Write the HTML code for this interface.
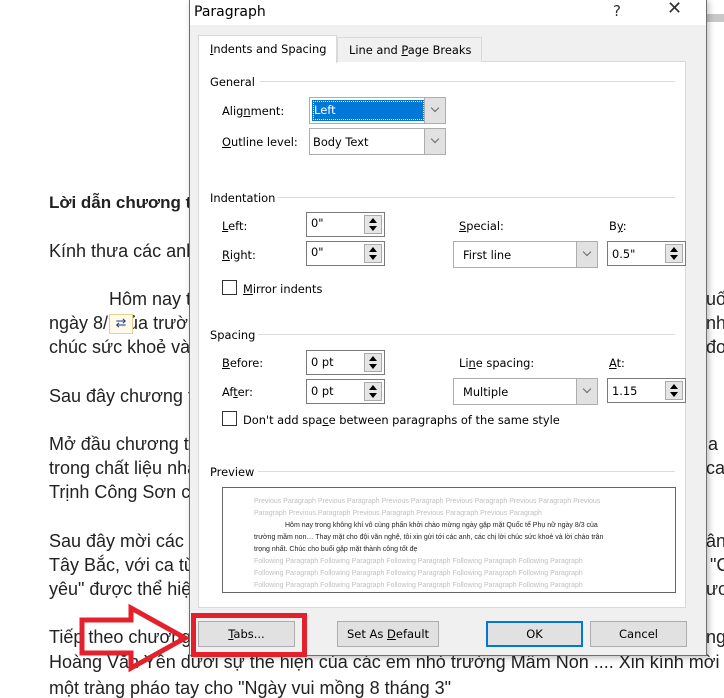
<!DOCTYPE html>
<html><head><meta charset="utf-8"><style>
*{margin:0;padding:0;box-sizing:border-box}
body{width:724px;height:686px;overflow:hidden;background:#fff;position:relative;font-family:"Liberation Sans",Arial,sans-serif}
.doc{position:absolute;left:49px;font-size:18px;color:#222;white-space:nowrap;line-height:20px}
.d{position:absolute;font-family:"DejaVu Sans","Liberation Sans",sans-serif;font-size:11.4px;color:#000;white-space:nowrap;line-height:14px}
.box{position:absolute;background:#fff;border:1px solid #7a7a7a}
.sel{position:absolute;background:#fff;border:1px solid #adadad}
.sel .b{position:absolute;right:0;top:0;bottom:0;width:21px;background:#e1e1e1;border-left:1px solid #adadad}
.sel .b:after{content:"";position:absolute;left:7px;top:7px;width:5px;height:5px;border-right:1px solid #666;border-bottom:1px solid #666;transform:rotate(45deg)}
.spin{position:absolute;right:2px;top:2px;width:18px;bottom:2px;background:#e5e5e5;border:1px solid #aaa}
.spin:before{content:"";position:absolute;left:4px;top:2px;border:4px solid transparent;border-bottom:5px solid #000;border-top:0}
.spin:after{content:"";position:absolute;left:4px;bottom:2px;border:4px solid transparent;border-top:5px solid #000;border-bottom:0}
.hr{position:absolute;height:1px;background:#dcdcdc}
.cb{position:absolute;width:15px;height:15px;border:1px solid #333;background:#fff}
.btn{position:absolute;height:26px;background:#e1e1e1;border:1px solid #adadad;font-family:"DejaVu Sans",sans-serif;font-size:11.5px;text-align:center;line-height:24px}
.pv{position:absolute;font-size:7px;color:#c0c0c0;white-space:nowrap;line-height:11.5px}
u{text-decoration:underline}
</style></head><body>
<div class="doc" style="top:193px;font-weight:bold;font-size:17px">Lời dẫn chương trình</div>
<div class="doc" style="top:241px">Kính thưa các anh chị</div>
<div class="doc" style="top:289px">&nbsp;&nbsp;&nbsp;&nbsp;&nbsp;&nbsp;&nbsp;&nbsp;&nbsp;&nbsp;&nbsp;&nbsp;Hôm nay trong</div>
<div class="doc" style="top:313px">ngày 8/&nbsp;&nbsp;&nbsp;&nbsp;ủa trường</div>
<div style="position:absolute;left:109px;top:314px;width:24px;height:20px;border:1px solid #e6d28a;background:#fffbe8;color:#1a3a9a;font-size:13px;text-align:center">⇄</div>
<div class="doc" style="top:337px">chúc sức khoẻ và lời</div>
<div class="doc" style="top:386px">Sau đây chương trình</div>
<div class="doc" style="top:434px">Mở đầu chương trình</div>
<div class="doc" style="top:458px">trong chất liệu nhạc</div>
<div class="doc" style="top:482px">Trịnh Công Sơn của</div>
<div class="doc" style="top:531px">Sau đây mời các anh</div>
<div class="doc" style="top:555px">Tây Bắc, với ca từ</div>
<div class="doc" style="top:579px">yêu" được thể hiện</div>
<div class="doc" style="top:627px">Tiếp theo chương trình</div>
<div class="doc" style="top:652px">Hoàng Văn Yên dưới sự thể hiện của các em nhỏ trường Mầm Non .... Xin kính mời</div>
<div class="doc" style="top:678px">một tràng pháo tay cho "Ngày vui mồng 8 tháng 3"</div>
<div class="doc" style="left:706px;top:289px">uố</div>
<div class="doc" style="left:706px;top:313px">nh</div>
<div class="doc" style="left:706px;top:337px">đơ</div>
<div class="doc" style="left:708px;top:434px">a</div>
<div class="doc" style="left:706px;top:458px">ca"</div>
<div class="doc" style="left:706px;top:531px">ân</div>
<div class="doc" style="left:710px;top:555px">"C</div>
<div class="doc" style="left:706px;top:579px">ươ</div>
<div class="doc" style="left:706px;top:627px">ng</div>
<div style="position:absolute;left:706px;top:14px;width:18px;height:8px;background:#c8c8c8"></div>

<svg style="position:absolute;left:0;top:0" width="724" height="686"><polygon points="82,620 131,620 131,608 185,638 131,668 131,653 82,653" fill="none" stroke="#e3202b" stroke-width="5" stroke-linejoin="miter"/></svg>

<div style="position:absolute;left:189px;top:-1px;width:518px;height:657px;background:#f0f0f0;border:1px solid #6f6f6f;box-shadow:2px 2px 6px rgba(0,0,0,.25)">
<div style="position:absolute;left:0;top:0;right:0;height:25px;background:#fff"></div>
</div>
<div class="d" style="left:194px;top:5px;font-size:14px">Paragraph</div>
<div class="d" style="left:613px;top:4px;font-size:15px;color:#333">?</div>
<div class="d" style="left:667px;top:2px;font-size:18px;color:#333">✕</div>
<div style="position:absolute;left:198px;top:61px;width:488px;height:547px;background:#fff;border:1px solid #d9d9d9"></div>
<div style="position:absolute;left:337px;top:37px;width:145px;height:25px;background:#f0f0f0;border:1px solid #d9d9d9;border-bottom:0"></div>
<div class="d" style="left:349px;top:43px"><span>Line and <u>P</u>age Breaks</span></div>
<div style="position:absolute;left:198px;top:35px;width:139px;height:28px;background:#fff;border:1px solid #d9d9d9;border-bottom:0"></div>
<div class="d" style="left:210px;top:42px"><u>I</u>ndents and Spacing</div>

<div class="d" style="left:210px;top:75px">General</div><div class="hr" style="left:260px;top:81px;width:415px"></div>
<div class="d" style="left:222px;top:104px">Alig<u>n</u>ment:</div>
<div class="sel" style="left:309px;top:97px;width:137px;height:27px"><div style="position:absolute;left:2px;top:2px;width:113px;height:21px;background:#0078d7;outline:1px dotted #fff;outline-offset:-2px;color:#fff;font-family:'DejaVu Sans',sans-serif;font-size:11.5px;padding:3px 2px">Left</div><div class="b"></div></div>
<div class="d" style="left:222px;top:135px"><u>O</u>utline level:</div>
<div class="sel" style="left:309px;top:128px;width:137px;height:27px"><div class="d" style="left:3px;top:6px">Body Text</div><div class="b"></div></div>

<div class="d" style="left:210px;top:191px">Indentation</div><div class="hr" style="left:278px;top:197px;width:397px"></div>
<div class="d" style="left:222px;top:219px"><u>L</u>eft:</div>
<div class="box" style="left:306px;top:212px;width:79px;height:25px"><div class="d" style="left:4px;top:3px">0"</div><div class="spin"></div></div>
<div class="d" style="left:222px;top:248px"><u>R</u>ight:</div>
<div class="box" style="left:306px;top:241px;width:79px;height:25px"><div class="d" style="left:4px;top:3px">0"</div><div class="spin"></div></div>
<div class="d" style="left:459px;top:219px"><u>S</u>pecial:</div>
<div class="sel" style="left:453px;top:241px;width:145px;height:27px"><div class="d" style="left:9px;top:6px">First line</div><div class="b"></div></div>
<div class="d" style="left:609px;top:219px">B<u>y</u>:</div>
<div class="box" style="left:607px;top:241px;width:79px;height:25px"><div class="d" style="left:4px;top:5px">0.5"</div><div class="spin"></div></div>
<div class="cb" style="left:222px;top:280px"></div>
<div class="d" style="left:243px;top:282px"><u>M</u>irror indents</div>

<div class="d" style="left:210px;top:328px">Spacing</div><div class="hr" style="left:258px;top:334px;width:417px"></div>
<div class="d" style="left:222px;top:356px"><u>B</u>efore:</div>
<div class="box" style="left:306px;top:350px;width:79px;height:25px"><div class="d" style="left:4px;top:4px">0 pt</div><div class="spin"></div></div>
<div class="d" style="left:222px;top:385px">Af<u>t</u>er:</div>
<div class="box" style="left:306px;top:379px;width:79px;height:25px"><div class="d" style="left:4px;top:4px">0 pt</div><div class="spin"></div></div>
<div class="d" style="left:459px;top:356px">Li<u>n</u>e spacing:</div>
<div class="sel" style="left:453px;top:378px;width:145px;height:27px"><div class="d" style="left:9px;top:6px">Multiple</div><div class="b"></div></div>
<div class="d" style="left:609px;top:356px"><u>A</u>t:</div>
<div class="box" style="left:607px;top:378px;width:79px;height:25px"><div class="d" style="left:4px;top:5px">1.15</div><div class="spin"></div></div>
<div class="cb" style="left:222px;top:411px"></div>
<div class="d" style="left:243px;top:413px">Don't add spa<u>c</u>e between paragraphs of the same style</div>

<div class="d" style="left:210px;top:465px">Preview</div><div class="hr" style="left:258px;top:471px;width:417px"></div>
<div style="position:absolute;left:222px;top:487px;width:454px;height:106px;background:#fff;border:1px solid #666"></div>
<div class="pv" style="left:254px;top:496px">Previous Paragraph Previous Paragraph Previous Paragraph Previous Paragraph Previous Paragraph Previous</div>
<div class="pv" style="left:254px;top:508px">Paragraph Previous Paragraph Previous Paragraph Previous Paragraph Previous Paragraph</div>
<div class="pv" style="left:285px;top:520px;color:#222">Hôm nay trong không khí vô cùng phấn khởi chào mừng ngày gặp mặt Quốc tế Phụ nữ ngày 8/3 của</div>
<div class="pv" style="left:254px;top:532px;color:#222">trường mầm non… Thay mặt cho đội văn nghệ, tôi xin gửi tới các anh, các chị lời chúc sức khoẻ và lời chào trân</div>
<div class="pv" style="left:254px;top:544px;color:#222">trọng nhất. Chúc cho buổi gặp mặt thành công tốt đẹ</div>
<div class="pv" style="left:254px;top:556px">Following Paragraph Following Paragraph Following Paragraph Following Paragraph Following Paragraph</div>
<div class="pv" style="left:254px;top:568px">Following Paragraph Following Paragraph Following Paragraph Following Paragraph Following Paragraph</div>
<div class="pv" style="left:254px;top:580px">Following Paragraph Following Paragraph Following Paragraph Following Paragraph Following Paragraph</div>

<div class="btn" style="left:198px;top:621px;width:97px"><u>T</u>abs...</div>
<div class="btn" style="left:337px;top:621px;width:102px">Set As <u>D</u>efault</div>
<div class="btn" style="left:486px;top:621px;width:97px;border:2px solid #0078d7;line-height:22px">OK</div>
<div class="btn" style="left:590px;top:621px;width:97px">Cancel</div>
<div style="position:absolute;left:191px;top:613px;width:116px;height:44px;border:5px solid #e3202b"></div>
</body></html>
